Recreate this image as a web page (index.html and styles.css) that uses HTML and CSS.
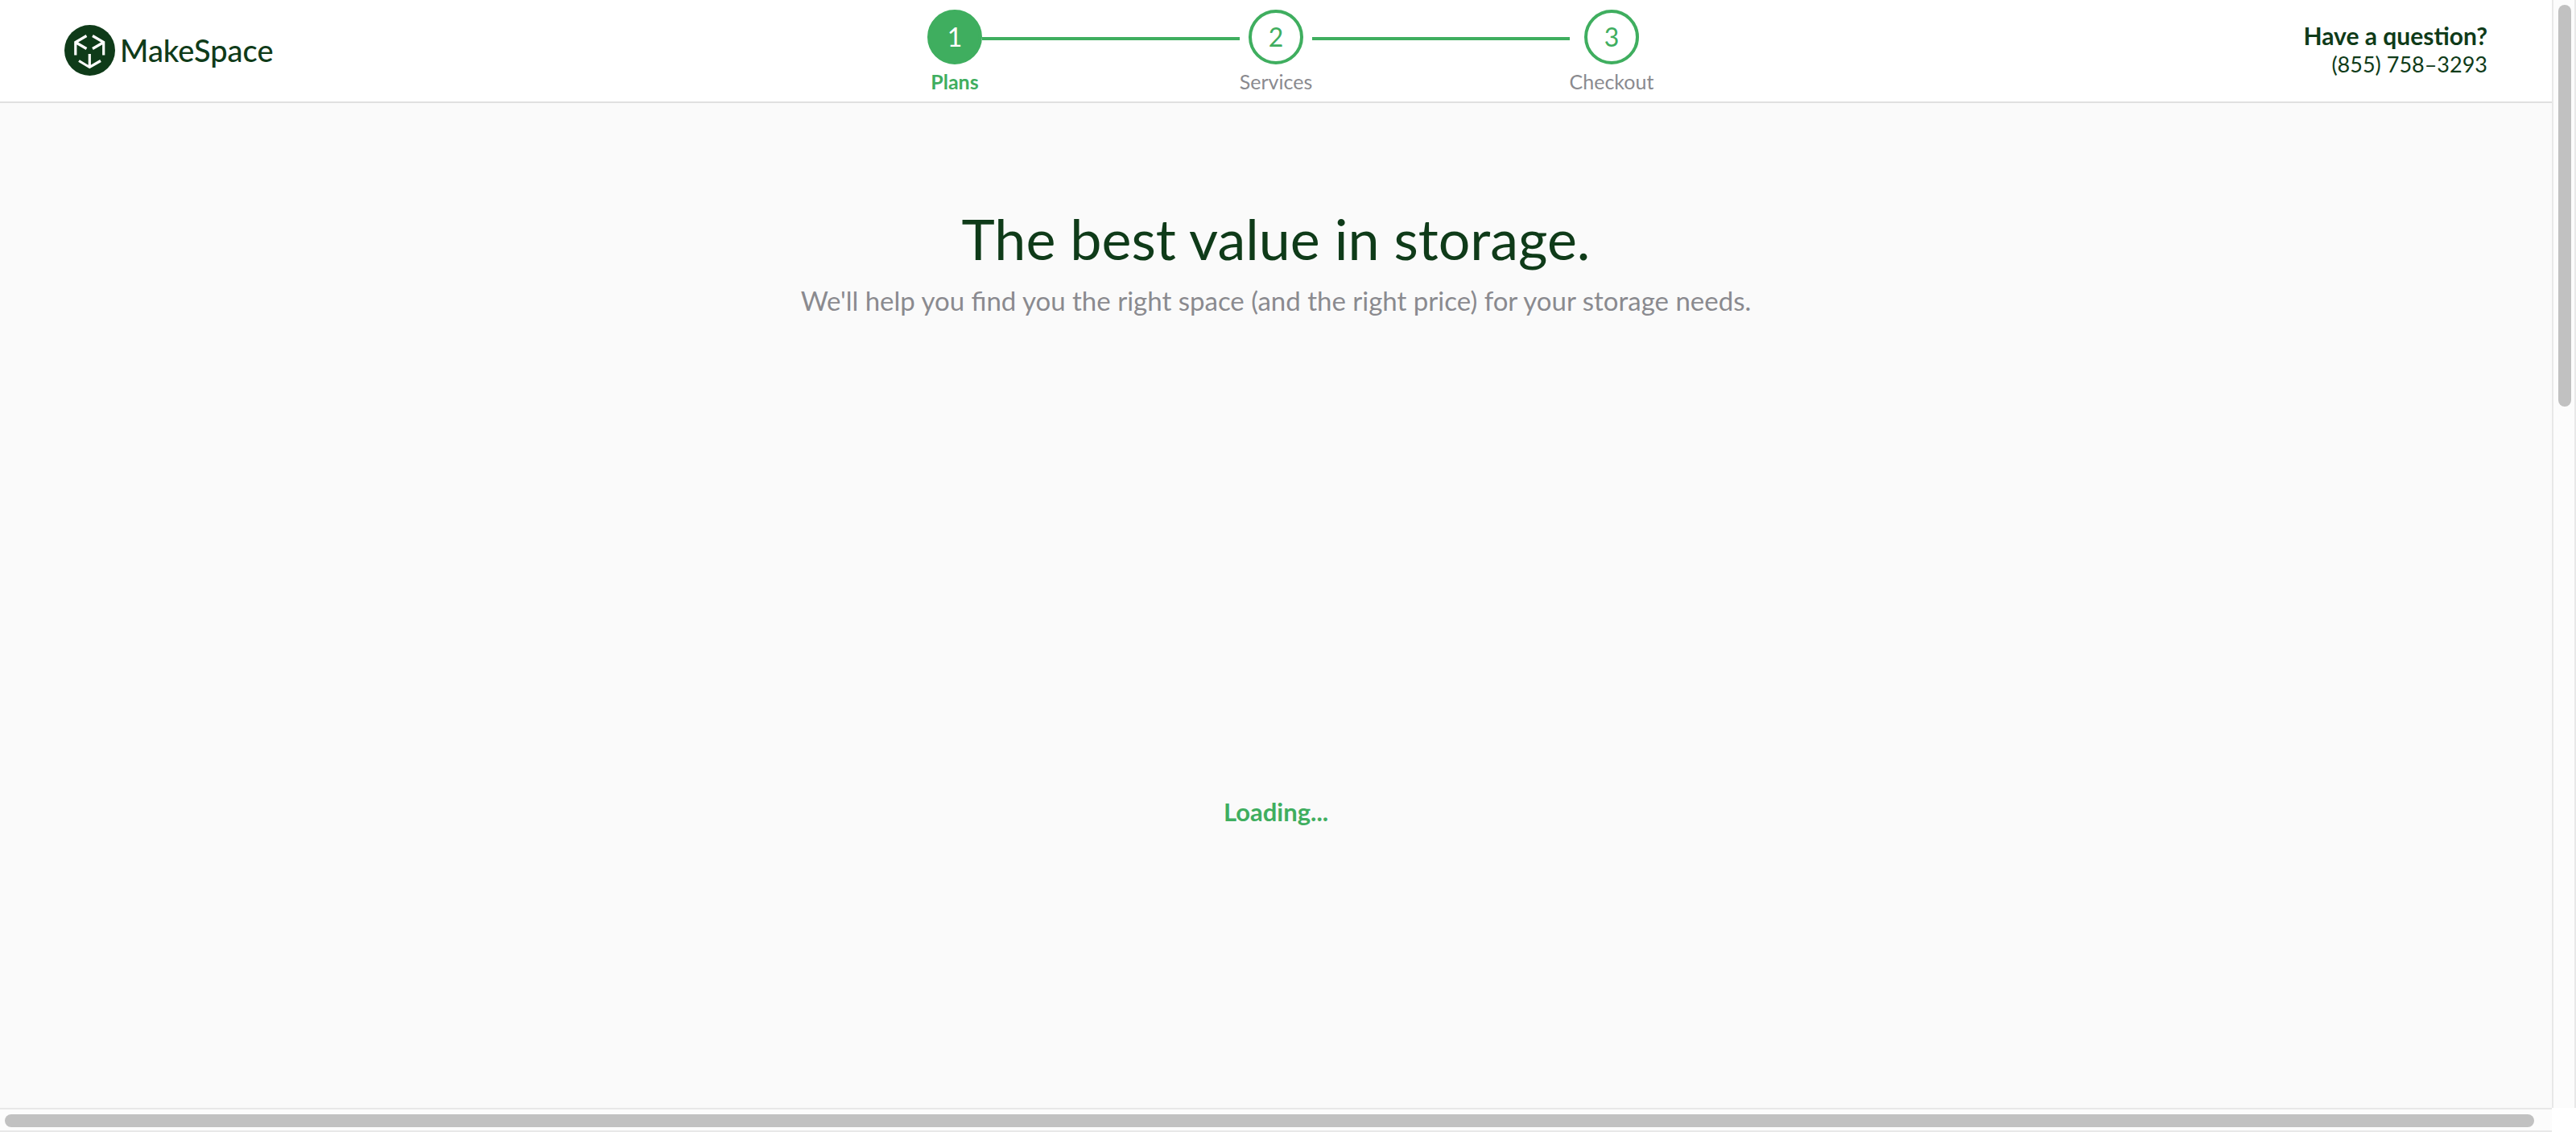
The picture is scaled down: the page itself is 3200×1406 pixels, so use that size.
FILE: index.html
```html
<!DOCTYPE html>
<html lang="en">
<head>
<meta charset="utf-8">
<title>MakeSpace</title>
<link rel="stylesheet" href="styles.css">
</head>
<body>
<div class="window">
  <div class="page">
    <header class="header">
      <a class="logo" href="#">
        <svg class="logo-mark" viewBox="0 0 63 63" aria-hidden="true">
          <circle cx="31.500" cy="31.500" r="31.500" fill="#0f3b19"/>
          <g fill="none" stroke="#fff" stroke-width="3.200" stroke-linejoin="miter">
            <path d="M27.500 13.500 13.800 21.500V37.500M13.800 21.500 27.500 29.500"/>
            <path d="M35 13.500 48.700 21.500V37.500M48.700 21.500 35 29.500"/>
            <path d="M31.300 36V52.500M18 44.500 31.300 52.500 45 44.500"/>
          </g>
        </svg>
        <span class="logo-name">MakeSpace</span>
      </a>
      <ol class="steps">
        <li class="step step-active"><span class="step-number">1</span><span class="step-label">Plans</span></li>
        <li class="step-line" aria-hidden="true"></li>
        <li class="step step-services"><span class="step-number">2</span><span class="step-label">Services</span></li>
        <li class="step-line" aria-hidden="true"></li>
        <li class="step step-checkout"><span class="step-number">3</span><span class="step-label">Checkout</span></li>
      </ol>
      <div class="contact">
        <strong class="contact-title">Have a question?</strong>
        <a href="tel:+18557583293">(855) 758–3293</a>
      </div>
    </header>
    <main class="main">
      <h1 class="title">The best value in storage.</h1>
      <p class="subtitle">We'll help you find you the right space (and the right price) for your storage needs.</p>
      <p class="loading" role="status">Loading...</p>
    </main>
  </div>
  <div class="track track-vertical"><div class="thumb"></div></div>
  <div class="track track-horizontal"><div class="thumb"></div></div>
</div>
</body>
</html>
```
FILE: styles.css
```css
* {
  box-sizing: border-box;
}

body {
  margin: 0;
  background: #fff;
  color: #0f3b19;
  font-family: Lato, sans-serif;
}

a {
  color: inherit;
  text-decoration: none;
}

.window {
  display: grid;
  grid-template: 1fr 30px / 1fr 30px;
  height: 100vh;
}

.page {
  overflow: hidden;
  background: #fafafa;
}

.header {
  display: flex;
  justify-content: space-between;
  height: 128px;
  padding: 0 80px;
  border-bottom: 2px solid #e0e0e0;
  background: #fff;
}

.logo {
  display: flex;
  align-items: center;
  gap: 6px;
  width: 260px;
  padding-bottom: 2px;
}

.logo-mark {
  flex: none;
  width: 63px;
  height: 63px;
}

.logo-name {
  font-size: 38px;
  line-height: 48px;
  font-weight: 500;
}

.steps {
  display: flex;
  margin: 0;
  padding: 12px 0 0;
  list-style: none;
}

.step {
  display: flex;
  flex-direction: column;
  align-items: center;
  gap: 8px;
  width: 68px;
  color: #8a8a8f;
}

.step-services {
  width: 90px;
}

.step-checkout {
  width: 104px;
}

.step-number {
  display: flex;
  align-items: center;
  justify-content: center;
  width: 68px;
  height: 68px;
  border: 4px solid #3fae5f;
  border-radius: 50%;
  color: #3fae5f;
  font-size: 32px;
  line-height: 36px;
  font-weight: 400;
}

.step-label {
  font-size: 25px;
  line-height: 26px;
}

.step-active {
  color: #3fae5f;
  font-weight: 700;
}

.step-active .step-number {
  background: #3fae5f;
  color: #fff;
}

.step-line {
  width: 320px;
  height: 4px;
  margin-top: 34px;
  background: #3fae5f;
}

.contact {
  display: flex;
  flex-direction: column;
  align-items: flex-end;
  width: 224px;
  padding-top: 26px;
  font-size: 27px;
  line-height: 36px;
  white-space: nowrap;
}

.contact-title {
  font-size: 30px;
}

.main {
  display: flex;
  flex-direction: column;
  align-items: center;
  padding-top: 122px;
  text-align: center;
}

.title {
  margin: 0;
  font-size: 70px;
  line-height: 92px;
  font-weight: 400;
}

.subtitle {
  margin: 8px 0 0;
  color: #8a8a8f;
  font-size: 33px;
  line-height: 46px;
}

.loading {
  margin: 594px 0 0;
  color: #3fae5f;
  font-size: 31px;
  line-height: 36px;
  font-weight: 700;
}

.track {
  border: solid #e8e8e8;
  background: #fcfcfc;
}

.track-vertical {
  padding: 6px 4px 6px 6px;
  border-width: 0 2px;
}

.track-horizontal {
  padding: 6px 22px 4px 6px;
  border-width: 2px 0;
}

.thumb {
  border-radius: 8px;
  background: #c1c1c1;
}

.track-vertical .thumb {
  width: 16px;
  height: 36.6%;
}

.track-horizontal .thumb {
  height: 16px;
}
```
